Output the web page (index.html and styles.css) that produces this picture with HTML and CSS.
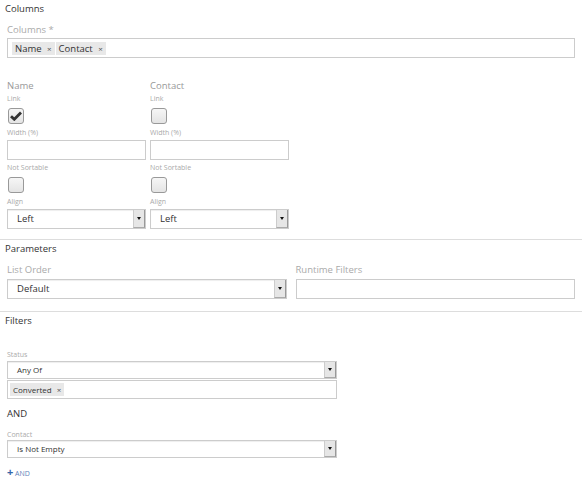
FILE: index.html
```html
<!DOCTYPE html>
<html lang="en">
<head>
    <meta charset="UTF-8">
    <title>Report Columns</title>
    <link rel="stylesheet" href="styles.css">
</head>
<body>
    <div class="section">
        <div class="section-title">Columns</div>
        <label class="field-label">Columns *</label>
        <div class="tag-box">
            <span class="tag">Name <span class="tag-x">&times;</span></span>
            <span class="tag">Contact <span class="tag-x">&times;</span></span>
        </div>

        <div class="column-grid">
            <div class="column-opts">
                <div class="col-name">Name</div>
                <div class="mini-label">Link</div>
                <span class="check checked">
                    <svg width="12" height="10" viewBox="0 0 12 10"><path d="M1 5.2 L4.3 8.3 L11 1.6" fill="none" stroke="#333" stroke-width="2.8"/></svg>
                </span>
                <div class="mini-label">Width (%)</div>
                <div class="text-input"></div>
                <div class="mini-label">Not Sortable</div>
                <span class="check"></span>
                <div class="mini-label">Align</div>
                <div class="select"><span class="select-text">Left</span><span class="select-btn"></span></div>
            </div>
            <div class="column-opts">
                <div class="col-name">Contact</div>
                <div class="mini-label">Link</div>
                <span class="check"></span>
                <div class="mini-label">Width (%)</div>
                <div class="text-input"></div>
                <div class="mini-label">Not Sortable</div>
                <span class="check"></span>
                <div class="mini-label">Align</div>
                <div class="select"><span class="select-text">Left</span><span class="select-btn"></span></div>
            </div>
        </div>
    </div>

    <div class="section">
        <div class="section-title">Parameters</div>
        <div class="param-grid">
            <div>
                <label class="field-label">List Order</label>
                <div class="select"><span class="select-text">Default</span><span class="select-btn"></span></div>
            </div>
            <div>
                <label class="field-label">Runtime Filters</label>
                <div class="text-input"></div>
            </div>
        </div>
    </div>

    <div class="section filters">
        <div class="section-title">Filters</div>
        <div class="filter-block">
            <div class="mini-label status-label">Status</div>
            <div class="select small"><span class="select-text">Any Of</span><span class="select-btn"></span></div>
            <div class="tag-box small">
                <span class="tag">Converted <span class="tag-x">&times;</span></span>
            </div>
            <div class="and-label">AND</div>
            <div class="mini-label contact-label">Contact</div>
            <div class="select small last"><span class="select-text">Is Not Empty</span><span class="select-btn"></span></div>
            <a class="add-and"><span class="plus">+</span> AND</a>
        </div>
    </div>
</body>
</html>
```

FILE: styles.css
```css
body {
    margin: 0;
    font-family: "Open Sans", "DejaVu Sans", sans-serif;
    color: #333;
    background: #fff;
}
.section {
    padding: 3px 7px 10px 7px;
}
.section + .section {
    border-top: 1px solid #ddd;
}
.section-title {
    font-size: 9.5px;
    line-height: 12px;
    color: #333;
    margin-left: -2px;
}
.field-label {
    display: block;
    font-size: 9.5px;
    line-height: 12px;
    color: #aaa;
    margin-top: 9px;
    margin-bottom: 2px;
}

/* tag input */
.tag-box {
    height: 20px;
    box-sizing: border-box;
    border: 1px solid #ccc;
    display: flex;
    align-items: center;
    gap: 1px;
    padding-left: 4px;
    background: #fff;
}
.tag {
    background: #e8e8e8;
    font-size: 9.5px;
    line-height: 13px;
    padding: 0 3px 0 3px;
    color: #333;
}
.tag-x {
    font-size: 8px;
    margin-left: 3px;
    color: #555;
}
.tag-box.small {
    width: 330px;
    height: 19px;
    margin-top: 1px;
    padding-left: 2px;
}
.tag-box.small .tag {
    font-size: 8px;
    line-height: 13px;
}

/* per column options */
.column-grid {
    display: grid;
    grid-template-columns: 139px 139px;
    gap: 4px;
    margin-top: 22px;
}
.column-opts {
    display: flex;
    flex-direction: column;
    align-items: flex-start;
}
.col-name {
    font-size: 9.5px;
    line-height: 12px;
    color: #999;
}
.mini-label {
    font-size: 7px;
    line-height: 10px;
    color: #aaa;
    margin-top: 3px;
}
.col-name + .mini-label {
    margin-top: 2px;
}
.check {
    width: 16px;
    height: 16px;
    box-sizing: border-box;
    border: 1px solid #999;
    border-radius: 3px;
    background: linear-gradient(#f6f6f6, #e4e4e4);
    margin: 4px 0 1px 1px;
    display: flex;
    align-items: center;
    justify-content: center;
}
.text-input {
    width: 100%;
    height: 20px;
    box-sizing: border-box;
    border: 1px solid #ccc;
    background: #fff;
    margin-top: 2px;
}
.column-opts .mini-label:last-of-type {
    margin-top: 4px;
}

/* select */
.select {
    width: 100%;
    height: 20px;
    box-sizing: border-box;
    border: 1px solid #ccc;
    box-shadow: inset 0 1px 1px rgba(0, 0, 0, 0.07);
    display: flex;
    align-items: stretch;
    margin-top: 2px;
    background: #fff;
}
.select-text {
    flex: 1;
    font-size: 9.5px;
    line-height: 18px;
    padding-left: 9px;
    color: #333;
}
.select-btn {
    width: 12px;
    box-sizing: border-box;
    background: #e6e6e6;
    border-left: 1px solid #ccc;
    border-right: 1px solid #999;
    border-bottom: 1px solid #aaa;
    position: relative;
}
.select-btn::after {
    content: "";
    position: absolute;
    left: 3px;
    top: 7px;
    border-left: 2px solid transparent;
    border-right: 2px solid transparent;
    border-top: 3px solid #111;
}

/* parameters */
.param-grid {
    display: grid;
    grid-template-columns: 1fr 1fr;
    gap: 9px;
    padding-bottom: 2px;
}
.param-grid .select,
.param-grid .text-input {
    margin-top: 3px;
}

/* filters */
.filter-block {
    width: 330px;
}
.status-label {
    margin-top: 23px;
}
.select.small {
    width: 330px;
    height: 18px;
    margin-top: 1px;
}
.select.small .select-btn::after {
    top: 6px;
}
.select.small .select-text {
    font-size: 8px;
    line-height: 16px;
}
.and-label {
    font-size: 9.5px;
    line-height: 12px;
    margin-top: 9px;
    color: #333;
}
.contact-label {
    margin-top: 10px;
}
.select.small.last {
    margin-top: 0;
}
.add-and {
    display: block;
    font-size: 7px;
    line-height: 10px;
    color: #5f7fb8;
    margin-top: 9px;
}
.plus {
    display: inline-block;
    font-size: 11px;
    line-height: 10px;
    color: #3566a8;
    font-weight: bold;
}
```
